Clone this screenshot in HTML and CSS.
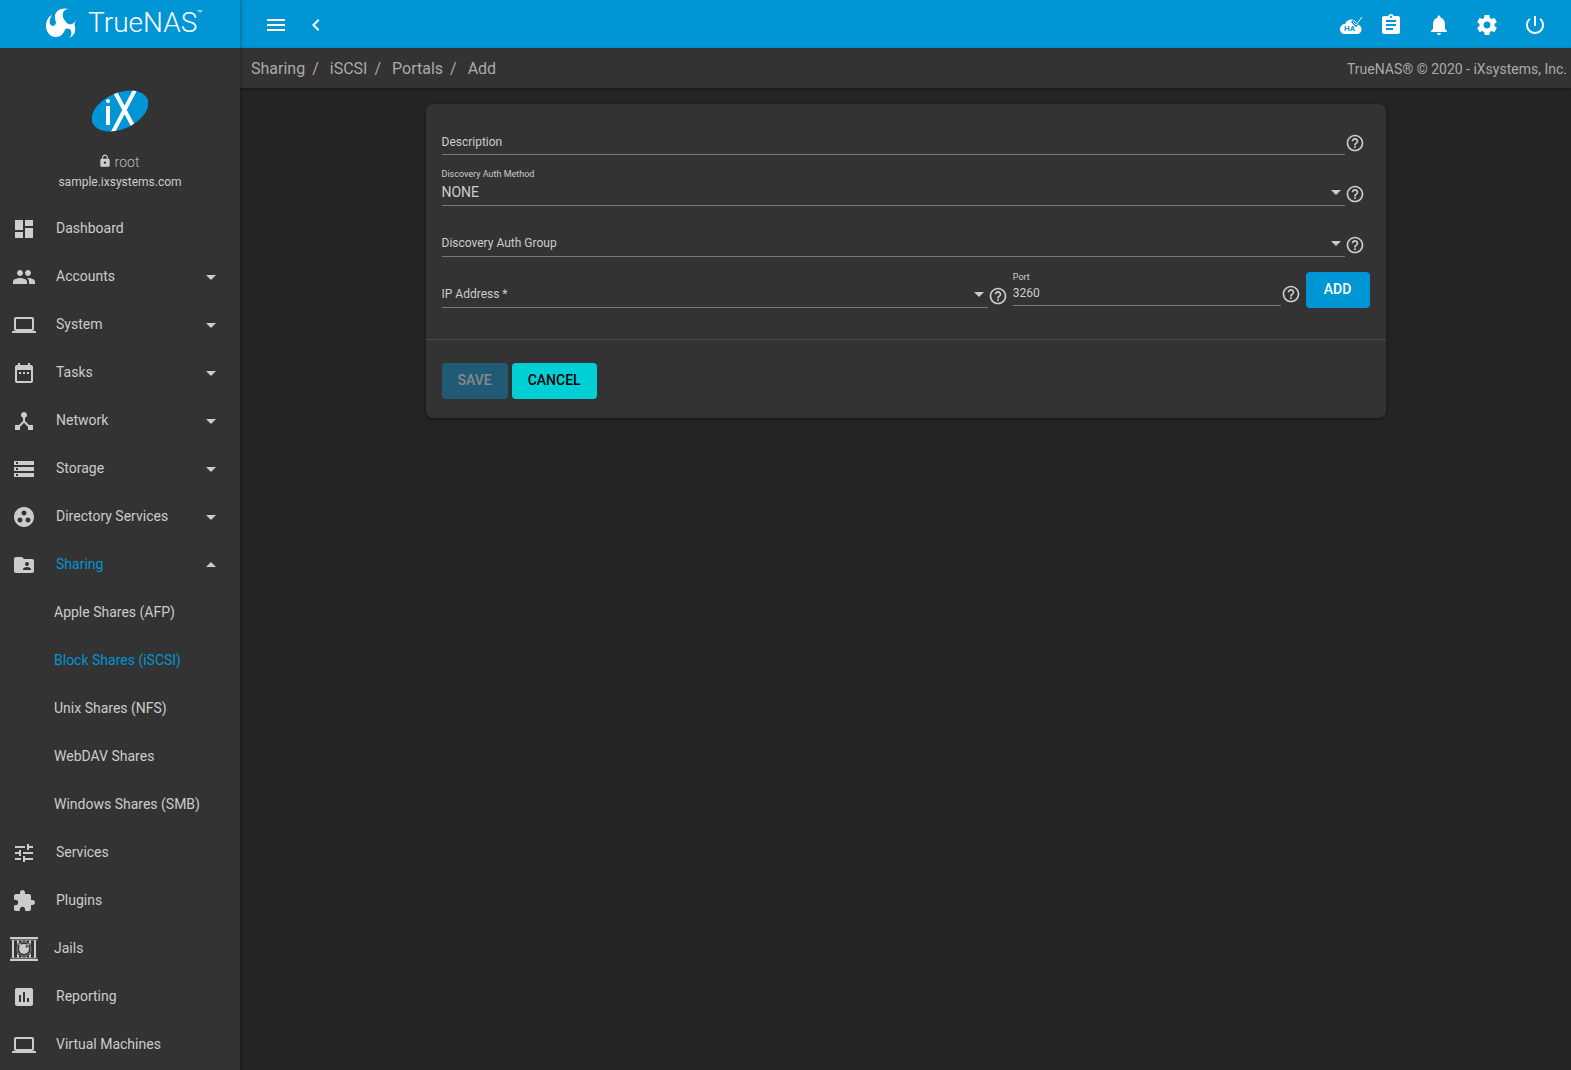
FILE: index.html
```html
<!DOCTYPE html>
<html lang="en">
<head>
<meta charset="utf-8">
<title>TrueNAS - Add Portal</title>
<meta name="viewport" content="width=device-width, initial-scale=1">
<link rel="stylesheet" href="styles.css">
</head>
<body>
<svg class="sprite" aria-hidden="true">
  <symbol id="help" viewBox="0 0 24 24"><path d="M11 18h2v-2h-2v2zm1-16C6.480 2 2 6.480 2 12s4.480 10 10 10 10-4.480 10-10S17.520 2 12 2zm0 18c-4.410 0-8-3.590-8-8s3.590-8 8-8 8 3.590 8 8-3.590 8-8 8zm0-14c-2.210 0-4 1.790-4 4h2c0-1.100.9-2 2-2s2 .9 2 2c0 2-3 1.750-3 5h2c0-2.250 3-2.500 3-5 0-2.210-1.790-4-4-4z"/></symbol>
  <symbol id="down" viewBox="0 0 24 24"><path d="M7 10l5 5 5-5z"/></symbol>
  <symbol id="up" viewBox="0 0 24 24"><path d="M7 14l5-5 5 5z"/></symbol>
  <symbol id="laptop" viewBox="0 0 24 24"><path d="M20 18c1.100 0 1.990-.9 1.990-2L22 6c0-1.100-.9-2-2-2H4c-1.100 0-2 .9-2 2v10c0 1.100.9 2 2 2H0v2h24v-2h-4zM4 6h16v10H4V6z"/></symbol>
</svg>
<div class="app">
  <aside class="sidebar">
    <a class="brand" href="#">
      <svg class="brand-mark" viewBox="0 0 30 30" aria-hidden="true"><path d="M23 1C15-1 8 3 9 10C9 13 11 15 10 17C9 19 5 19 4 16C3 13 4 10 6 7C2 9 0 13 0 18C0 24 4 29 10 29C15 29 17 26 19 22C20 20 24 20 25 23C26 26 25 28 23 30C28 28 30 24 29 19C28 17 29 14 30 12C28 16 24 18 21 15C18 12 16 9 17 5C18 2 20 1 23 1Z"/><path d="M3 15C6 20 10 18 10 14L17 18L16 25L8 28L2 24Z"/></svg>
      <span class="brand-name">TrueNAS</span><span class="brand-tm">™</span>
    </a>
    <div class="profile">
      <svg class="ix" viewBox="0 0 56 42" aria-hidden="true">
        <defs><clipPath id="oval"><ellipse cx="28" cy="21" rx="30" ry="18" transform="rotate(-24 28 21)"/></clipPath></defs>
        <g clip-path="url(#oval)"><path fill="#0095d5" d="M-4-4h64v50H-4z"/><path fill="none" stroke="#fff" stroke-width="4" d="M16 16v19M23 2l18 34M44-2L20 44"/><circle cx="16" cy="11" r="2" fill="#fff"/></g>
      </svg>
      <div class="user"><svg class="lock" viewBox="0 0 24 24" aria-hidden="true"><path d="M18 8h-1V6c0-2.760-2.240-5-5-5S7 3.240 7 6v2H6c-1.100 0-2 .9-2 2v10c0 1.100.9 2 2 2h12c1.100 0 2-.9 2-2V10c0-1.100-.9-2-2-2zm-6 9c-1.100 0-2-.9-2-2s.9-2 2-2 2 .9 2 2-.9 2-2 2zm3.100-9H8.900V6c0-1.710 1.390-3.100 3.100-3.100s3.100 1.390 3.100 3.100v2z"/></svg><span>root</span></div>
      <div class="host">sample.ixsystems.com</div>
    </div>
    <nav class="menu">
      <a href="#"><svg viewBox="0 0 24 24"><path d="M3 13h8V3H3v10zm0 8h8v-6H3v6zm10 0h8V11h-8v10zm0-18v6h8V3h-8z"/></svg><span>Dashboard</span></a>
      <a href="#"><svg viewBox="0 0 24 24"><path d="M16 11c1.660 0 2.990-1.340 2.990-3S17.660 5 16 5s-3 1.340-3 3 1.340 3 3 3zm-8 0c1.660 0 2.990-1.340 2.990-3S9.660 5 8 5 5 6.340 5 8s1.340 3 3 3zm0 2c-2.330 0-7 1.170-7 3.500V19h14v-2.500C15 14.170 10.330 13 8 13zm8 0c-.29 0-.62.020-.97.050 1.160.84 1.970 1.970 1.970 3.450V19h6v-2.500c0-2.330-4.670-3.500-7-3.500z"/></svg><span>Accounts</span><svg class="caret"><use href="#down"/></svg></a>
      <a href="#"><svg><use href="#laptop"/></svg><span>System</span><svg class="caret"><use href="#down"/></svg></a>
      <a href="#"><svg viewBox="0 0 24 24"><path d="M9 11H7v2h2v-2zm4 0h-2v2h2v-2zm4 0h-2v2h2v-2zm2-7h-1V2h-2v2H8V2H6v2H5c-1.110 0-1.990.9-1.990 2L3 20c0 1.100.89 2 2 2h14c1.100 0 2-.9 2-2V6c0-1.100-.9-2-2-2zm0 16H5V9h14v11z"/></svg><span>Tasks</span><svg class="caret"><use href="#down"/></svg></a>
      <a href="#"><svg viewBox="0 0 24 24"><path d="M17 16l-4-4V8.820C14.160 8.400 15 7.300 15 6c0-1.660-1.340-3-3-3S9 4.340 9 6c0 1.300.84 2.400 2 2.820V12l-4 4H3v5h5v-3.050l4-4.200 4 4.200V21h5v-5h-4z"/></svg><span>Network</span><svg class="caret"><use href="#down"/></svg></a>
      <a href="#"><svg viewBox="0 0 24 24"><path d="M2 20h20v-4H2v4zm2-3h2v2H4v-2zM2 4v4h20V4H2zm4 3H4V5h2v2zm-4 7h20v-4H2v4zm2-3h2v2H4v-2z"/></svg><span>Storage</span><svg class="caret"><use href="#down"/></svg></a>
      <a href="#"><svg viewBox="0 0 24 24"><path d="M12 2C6.480 2 2 6.480 2 12s4.480 10 10 10 10-4.480 10-10S17.520 2 12 2zM8 17.500c-1.380 0-2.500-1.120-2.500-2.500s1.120-2.500 2.500-2.500 2.500 1.120 2.500 2.500-1.120 2.500-2.500 2.500zM9.500 8c0-1.380 1.120-2.500 2.500-2.500s2.500 1.120 2.500 2.500-1.120 2.500-2.500 2.500S9.500 9.380 9.500 8zm6.500 9.500c-1.380 0-2.500-1.120-2.500-2.500s1.120-2.500 2.500-2.500 2.500 1.120 2.500 2.500-1.120 2.500-2.500 2.500z"/></svg><span>Directory Services</span><svg class="caret"><use href="#down"/></svg></a>
      <a href="#" class="active"><svg viewBox="0 0 24 24"><path d="M20 6h-8l-2-2H4c-1.100 0-1.990.9-1.990 2L2 18c0 1.100.9 2 2 2h16c1.100 0 2-.9 2-2V8c0-1.100-.9-2-2-2zm-5 3c1.100 0 2 .9 2 2s-.9 2-2 2-2-.9-2-2 .9-2 2-2zm4 8h-8v-1c0-1.330 2.670-2 4-2s4 .67 4 2v1z"/></svg><span>Sharing</span><svg class="caret"><use href="#up"/></svg></a>
      <a href="#" class="sub">Apple Shares (AFP)</a>
      <a href="#" class="sub active">Block Shares (iSCSI)</a>
      <a href="#" class="sub">Unix Shares (NFS)</a>
      <a href="#" class="sub">WebDAV Shares</a>
      <a href="#" class="sub">Windows Shares (SMB)</a>
      <a href="#"><svg viewBox="0 0 24 24"><path d="M3 17v2h6v-2H3zM3 5v2h10V5H3zm10 16v-2h8v-2h-8v-2h-2v6h2zM7 9v2H3v2h4v2h2V9H7zm14 4v-2H11v2h10zm-6-4h2V7h4V5h-4V3h-2v6z"/></svg><span>Services</span></a>
      <a href="#"><svg viewBox="0 0 24 24"><path d="M20.500 11H19V7c0-1.100-.9-2-2-2h-4V3.500C13 2.120 11.880 1 10.500 1S8 2.120 8 3.500V5H4c-1.100 0-1.990.9-1.990 2v3.800H3.500c1.490 0 2.700 1.210 2.700 2.700s-1.210 2.700-2.700 2.700H2V20c0 1.100.9 2 2 2h3.800v-1.500c0-1.490 1.210-2.700 2.700-2.700 1.490 0 2.700 1.210 2.700 2.700V22H17c1.100 0 2-.9 2-2v-4h1.500c1.380 0 2.500-1.120 2.500-2.500S21.880 11 20.500 11z"/></svg><span>Plugins</span></a>
      <a href="#" class="jails"><svg viewBox="0 0 28 24"><path d="M0 0h28v2H0zM0 22h28v2H0zM2 3h2v18H2zM7 3h2v18H7zM11 3h2v18h-2zM15 3h2v18h-2zM19 3h2v18h-2zM24 3h2v18h-2z"/><path fill="none" stroke="#999" d="M1 3h26M1 21h26"/><circle cx="14" cy="12" r="8" fill="#333"/><circle cx="14" cy="12" r="7" fill="none" stroke="#888" stroke-width="1"/><circle cx="14" cy="12" r="5"/><path d="M9 6l4 3-3 2zM19 6l-4 3 3 1z"/><path fill="#333" d="M15 9l3-1-1 3z"/></svg><span>Jails</span></a>
      <a href="#"><svg viewBox="0 0 24 24"><path d="M19 3H5c-1.100 0-2 .9-2 2v14c0 1.100.9 2 2 2h14c1.100 0 2-.9 2-2V5c0-1.100-.9-2-2-2zM9 17H7v-7h2v7zm4 0h-2V7h2v10zm4 0h-2v-4h2v4z"/></svg><span>Reporting</span></a>
      <a href="#"><svg><use href="#laptop"/></svg><span>Virtual Machines</span></a>
    </nav>
  </aside>
  <div class="content">
    <header class="topbar">
      <button type="button" aria-label="Menu"><svg viewBox="0 0 24 24"><path d="M3 18h18v-2H3v2zm0-5h18v-2H3v2zm0-7v2h18V6H3z"/></svg></button>
      <button type="button" aria-label="Collapse"><svg viewBox="0 0 24 24"><path d="M15.410 7.410L14 6l-6 6 6 6 1.410-1.410L10.830 12z"/></svg></button>
      <div class="actions">
        <button type="button" class="ha" aria-label="High availability"><svg viewBox="0 0 24 24"><path d="M18 11C17 5 8 5 6 11C0 11-1 20 5 21H18C23 21 24 14 20 12Z"/><path fill="none" stroke="#0095d5" stroke-width="3" d="M13 8l4 4 7-8"/><path fill="none" stroke="#fff" stroke-width="1" d="M14 9l3 3 6-8"/><text x="5" y="18" font-size="8" font-weight="700" fill="#0095d5">HA</text></svg></button>
        <button type="button" aria-label="Tasks"><svg viewBox="0 0 24 24"><path d="M19 3h-4.180C14.400 1.840 13.300 1 12 1c-1.300 0-2.400.84-2.820 2H5c-1.100 0-2 .9-2 2v14c0 1.100.9 2 2 2h14c1.100 0 2-.9 2-2V5c0-1.100-.9-2-2-2zm-7 0c.55 0 1 .45 1 1s-.45 1-1 1-1-.45-1-1 .45-1 1-1zm2 14H7v-2h7v2zm3-4H7v-2h10v2zm0-4H7V7h10v2z"/></svg></button>
        <button type="button" aria-label="Alerts"><svg viewBox="0 0 24 24"><path d="M12 22c1.100 0 2-.9 2-2h-4c0 1.100.89 2 2 2zm6-6v-5c0-3.070-1.640-5.640-4.500-6.320V4c0-.83-.67-1.500-1.500-1.500s-1.500.67-1.500 1.500v.68C7.630 5.360 6 7.920 6 11v5l-2 2v1h16v-1l-2-2z"/></svg></button>
        <button type="button" aria-label="Settings"><svg viewBox="0 0 24 24"><path d="M19.430 12.980c.04-.32.07-.64.07-.98s-.03-.66-.07-.98l2.110-1.650c.19-.15.24-.42.120-.64l-2-3.460c-.12-.22-.39-.3-.61-.22l-2.490 1c-.52-.4-1.080-.73-1.690-.98l-.38-2.650C14.460 2.180 14.250 2 14 2h-4c-.25 0-.46.18-.49.42l-.38 2.650c-.61.25-1.170.59-1.690.98l-2.490-1c-.23-.09-.49 0-.61.22l-2 3.460c-.13.22-.07.49.12.64l2.110 1.650c-.04.32-.07.65-.07.98s.03.66.07.98l-2.110 1.650c-.19.15-.24.42-.12.64l2 3.460c.12.22.39.3.61.22l2.490-1c.52.4 1.080.73 1.690.98l.38 2.650c.03.24.24.42.49.42h4c.25 0 .46-.18.49-.42l.38-2.650c.61-.25 1.170-.59 1.690-.98l2.490 1c.23.09.49 0 .61-.22l2-3.460c.12-.22.07-.49-.12-.64l-2.110-1.650zM12 15.500c-1.930 0-3.500-1.570-3.500-3.500s1.570-3.500 3.500-3.500 3.500 1.570 3.500 3.500-1.570 3.500-3.500 3.500z"/></svg></button>
        <button type="button" aria-label="Power"><svg viewBox="0 0 24 24"><path d="M13 3h-2v10h2V3zm4.830 2.170l-1.420 1.420C17.990 7.860 19 9.810 19 12c0 3.870-3.130 7-7 7s-7-3.130-7-7c0-2.190 1.010-4.140 2.580-5.420L6.170 5.170C4.230 6.820 3 9.260 3 12c0 4.970 4.030 9 9 9s9-4.030 9-9c0-2.740-1.230-5.180-3.170-6.830z"/></svg></button>
      </div>
    </header>
    <div class="crumbs">
      <nav><a href="#">Sharing</a><i>/</i><a href="#">iSCSI</a><i>/</i><a href="#">Portals</a><i>/</i><a href="#">Add</a></nav>
      <span class="copyright">TrueNAS® © 2020 - iXsystems, Inc.</span>
    </div>
    <main>
      <form class="card">
        <div class="fields">
          <div class="field">
            <div class="line"><label for="description">Description</label><input id="description" type="text"></div>
            <svg class="help"><use href="#help"/></svg>
          </div>
          <div class="field">
            <div class="line select filled"><label for="method">Discovery Auth Method</label><select id="method"><option>NONE</option><option>CHAP</option></select><svg class="caret"><use href="#down"/></svg></div>
            <svg class="help"><use href="#help"/></svg>
          </div>
          <div class="field">
            <div class="line select"><label for="group">Discovery Auth Group</label><select id="group"><option></option></select><svg class="caret"><use href="#down"/></svg></div>
            <svg class="help"><use href="#help"/></svg>
          </div>
          <div class="pair">
            <div class="field address">
              <div class="line select"><label for="ip">IP Address *</label><select id="ip"><option></option></select><svg class="caret"><use href="#down"/></svg></div>
              <svg class="help"><use href="#help"/></svg>
            </div>
            <div class="field port">
              <div class="line filled"><label for="port">Port</label><input id="port" type="text" value="3260"></div>
              <svg class="help"><use href="#help"/></svg>
            </div>
            <button type="button" class="btn primary">ADD</button>
          </div>
        </div>
        <div class="buttons">
          <button type="submit" class="btn save" disabled>SAVE</button>
          <button type="button" class="btn cancel">CANCEL</button>
        </div>
      </form>
    </main>
  </div>
</div>
</body>
</html>
```
FILE: styles.css
```css
* { box-sizing: border-box; }
body {
  margin: 0;
  background: #242424;
  color: #ccc;
  font: 14px/20px Roboto, sans-serif;
}
a { color: inherit; text-decoration: none; }
button, input, select { font: inherit; color: inherit; }
svg { fill: currentColor; width: 24px; height: 24px; flex: none; }
.sprite { display: none; }

.app { display: flex; min-height: 100vh; }
.sidebar {
  position: relative;
  width: 240px;
  flex: none;
  background: #333;
  box-shadow: 0 0 4px rgba(0, 0, 0, .5);
}
.content { flex: 1; min-width: 0; }

/* Brand */
.brand {
  display: flex;
  align-items: center;
  height: 48px;
  padding: 0 0 3px 46px;
  background: #0095d5;
  color: #fff;
}
.brand-mark { width: 30px; height: 30px; margin-right: 12px; }
.brand-name { font-size: 28px; line-height: 44px; font-weight: 300; }
.brand-tm { align-self: flex-start; font-size: 8px; line-height: 28px; }

/* Profile */
.profile {
  display: flex;
  flex-direction: column;
  align-items: center;
  height: 156px;
  padding-top: 42px;
}
.ix { width: 56px; height: 42px; }
.user {
  display: flex;
  align-items: center;
  gap: 3px;
  margin-top: 20px;
  padding-right: 3px;
  color: #bbb;
  font-weight: 300;
}
.lock { width: 14px; height: 14px; margin-bottom: 2px; color: #ccc; }
.host { font-size: 12px; }

/* Menu */
.menu a {
  display: flex;
  align-items: center;
  height: 48px;
  padding: 0 17px 0 12px;
}
.menu svg { margin-top: 2px; }
.menu a > span { margin-left: 20px; }
.menu .caret { margin-left: auto; }
.menu .active { color: #0095d5; }
.menu .active svg { color: #ccc; }
.menu .sub { padding-left: 54px; }
.menu .jails { padding-left: 10px; }
.menu .jails svg { width: 28px; }
.menu .jails > span { margin-left: 16px; }

/* Top bar */
.topbar {
  display: flex;
  align-items: center;
  height: 48px;
  padding: 2px 12px 0 16px;
  background: #0095d5;
  color: #fff;
}
.topbar button {
  display: flex;
  justify-content: center;
  width: 40px;
  padding: 0;
  border: 0;
  background: none;
}
.actions { display: flex; margin-left: auto; }
.topbar .actions button { width: 48px; }
.topbar .actions .ha { width: 32px; }

.crumbs {
  display: flex;
  justify-content: space-between;
  align-items: center;
  height: 40px;
  padding: 1px 4px 0 11px;
  background: #333;
  color: #aaa;
  font-size: 16px;
  box-shadow: 0 1px 3px rgba(0, 0, 0, .4);
}
.crumbs i { margin: 0 11px 0 7px; font-style: normal; }
.copyright { font-size: 14px; }

/* Form card */
.card {
  width: 90%;
  max-width: 960px;
  margin: 16px auto;
  border-radius: 7px;
  background: #333;
  box-shadow: 0 1px 3px rgba(0, 0, 0, .5);
}
.fields { padding: 0 16px 31px; }
.field { display: flex; align-items: flex-end; padding-right: 5px; }
.line {
  position: relative;
  flex: 1;
  height: 51px;
  border-bottom: 1px solid #777;
}
.line label {
  position: absolute;
  left: 0;
  bottom: 2px;
  font-size: 12px;
  pointer-events: none;
}
.line.select label { bottom: 3px; }
.line.filled label { bottom: 18px; font-size: 9px; }
.line.select.filled label { bottom: 21px; }
.line input, .line select {
  width: 100%;
  height: 100%;
  padding: 24px 0 0;
  border: 0;
  outline: 0;
  background: none;
  appearance: none;
}
.line input { font-size: 12px; }
.line .caret { position: absolute; right: -3px; bottom: 1px; pointer-events: none; }
.help { width: 20px; height: 20px; margin-bottom: 2px; }
.pair { display: flex; align-items: flex-start; }
.address { flex: 63; }
.port { flex: 32; }
.port .line { height: 49px; }

.btn {
  height: 36px;
  padding: 0 16px 2px;
  border: 0;
  border-radius: 4px;
  font-weight: 500;
}
.primary { min-width: 64px; margin-top: 15px; background: #0095d5; color: #fff; }
.buttons {
  display: flex;
  gap: 4px;
  padding: 23px 16px 19px;
  border-top: 1px solid #4a4a4a;
}
.save { background: #215a75; color: #888; }
.cancel { background: #00d0d6; color: #000; }
```
